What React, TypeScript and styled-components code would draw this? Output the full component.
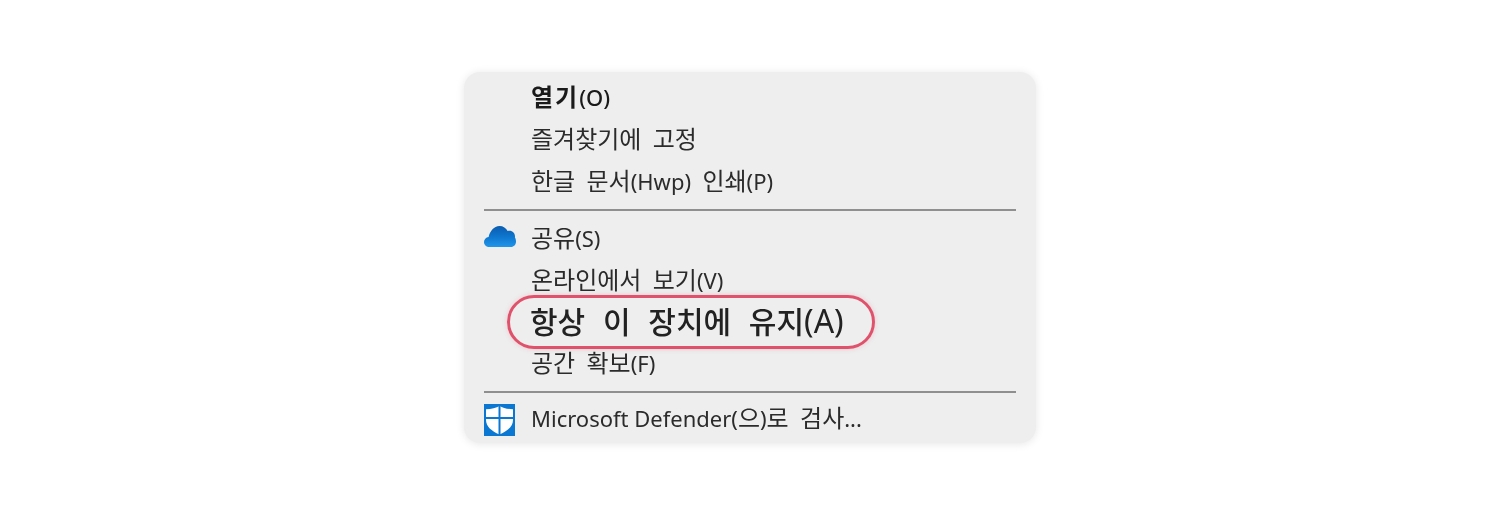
import React from "react"
import styled, { createGlobalStyle } from "styled-components"

const GlobalStyle = createGlobalStyle`
	html, body {
		margin: 0;
		padding: 0;
		background: #ffffff;
	}
`

const Page = styled.div`
	display: flex;
	justify-content: center;
	width: 1500px;
	height: 530px;
	padding-top: 72px;
	box-sizing: border-box;
`

const Menu = styled.div`
	width: 572px;
	height: 371px;
	box-sizing: border-box;
	padding: 4px 20px 0;
	background: #eeeeee;
	border-radius: 16px;
	box-shadow: 0 1px 8px rgba(0, 0, 0, 0.1);
	font-family: "Noto Sans CJK KR", "Noto Sans", sans-serif;
	font-size: 24px;
	color: #2b2b2b;
`

const Row = styled.div`
	display: flex;
	align-items: center;
	height: 42px;
`

const IconSlot = styled.div`
	display: flex;
	align-items: center;
	width: 47px;
	flex-shrink: 0;
`

const Latin = styled.span`
	font-family: "Noto Sans", sans-serif;
	font-size: 22px;
	letter-spacing: 0;
	word-spacing: 0;
`

const Label = styled.span<{ $bold?: boolean; $raise?: boolean }>`
	padding-bottom: ${(p) => (p.$raise ? "7px" : "4px")};
	font-weight: ${(p) => (p.$bold ? 700 : 400)};
	letter-spacing: ${(p) => (p.$bold ? "2px" : "0")};
	white-space: nowrap;
	word-spacing: 6px;
	color: ${(p) => (p.$bold ? "#1a1a1a" : "inherit")};
	filter: blur(0.35px);

	${Latin} {
		font-weight: ${(p) => (p.$bold ? 500 : 400)};
	}
`

const Divider = styled.div`
	height: 2px;
	background: #8f8f8f;
	margin: 7px 0 6px;
`

const HighlightRow = styled.div`
	display: flex;
	align-items: center;
	width: 368px;
	height: 54px;
	box-sizing: border-box;
	margin: -6px 0 -7px 23px;
	padding-left: 20px;
	border: 3px solid #e0526c;
	border-radius: 27px;
	box-shadow: 0 0 5px rgba(224, 82, 108, 0.25);
	font-size: 30px;
	font-weight: 500;
	color: #222222;
`

const HighlightLabel = styled.span`
	padding-bottom: 4px;
	white-space: nowrap;
	word-spacing: 11px;
	filter: blur(0.35px);

	${Latin} {
		font-size: 32px;
		font-weight: 400;
	}
`

const CloudWrap = styled.span`
	display: flex;
	margin-bottom: 3px;
`

const CloudIcon = () => (
	<CloudWrap>
		<svg width="32" height="21" viewBox="0 0 32 21">
			<defs>
				<linearGradient id="cloudFill" x1="0" y1="0" x2="0" y2="1">
					<stop offset="0" stopColor="#0a5cb0" />
					<stop offset="0.55" stopColor="#0f78d0" />
					<stop offset="1" stopColor="#1f96ea" />
				</linearGradient>
			</defs>
			<path
				d="M5 21C2.200 21 0 18.800 0 16c0-2.600 1.900-4.700 4.600-5C6 5 10 0 15.500 0c3.700 0 6.600 2 8.100 5 .6-.1 1.200-.2 1.800-.2 3.400 0 5.600 2.700 5.600 5.400 0 .4 0 .8-.1 1.200.7 1 1.100 2.500 1.100 4.100 0 3.200-2.200 5.500-5 5.500z"
				fill="url(#cloudFill)"
			/>
		</svg>
	</CloudWrap>
)

const ShieldIcon = () => (
	<svg width="31" height="32" viewBox="0 0 31 32">
		<rect width="31" height="32" fill="#0a78d2" />
		<path
			d="M15.500 2c3.200 2 8 3.200 13.500 3.200V16c0 6.500-5.500 11-13.500 14.500C7.500 27 2 22.500 2 16V5.200C7.500 5.200 12.300 4 15.500 2z"
			fill="#ffffff"
		/>
		<rect x="14.500" y="1" width="2" height="30" fill="#0a78d2" />
		<rect x="1" y="13" width="29" height="2" fill="#0a78d2" />
	</svg>
)

const App = () => (
	<Page>
		<GlobalStyle />
		<Menu>
			<Row>
				<IconSlot />
				<Label $bold>
					열기<Latin>(O)</Latin>
				</Label>
			</Row>
			<Row>
				<IconSlot />
				<Label>즐겨찾기에 고정</Label>
			</Row>
			<Row>
				<IconSlot />
				<Label>
					한글 문서<Latin>(Hwp)</Latin> 인쇄<Latin>(P)</Latin>
				</Label>
			</Row>
			<Divider />
			<Row>
				<IconSlot>
					<CloudIcon />
				</IconSlot>
				<Label>
					공유<Latin>(S)</Latin>
				</Label>
			</Row>
			<Row>
				<IconSlot />
				<Label>
					온라인에서 보기<Latin>(V)</Latin>
				</Label>
			</Row>
			<HighlightRow>
				<HighlightLabel>
					항상 이 장치에 유지<Latin>(A)</Latin>
				</HighlightLabel>
			</HighlightRow>
			<Row>
				<IconSlot />
				<Label>
					공간 확보<Latin>(F)</Latin>
				</Label>
			</Row>
			<Divider />
			<Row>
				<IconSlot>
					<ShieldIcon />
				</IconSlot>
				<Label $raise>
					<Latin>Microsoft Defender(</Latin>으<Latin>)</Latin>로 검사<Latin>...</Latin>
				</Label>
			</Row>
		</Menu>
	</Page>
)

export default App
